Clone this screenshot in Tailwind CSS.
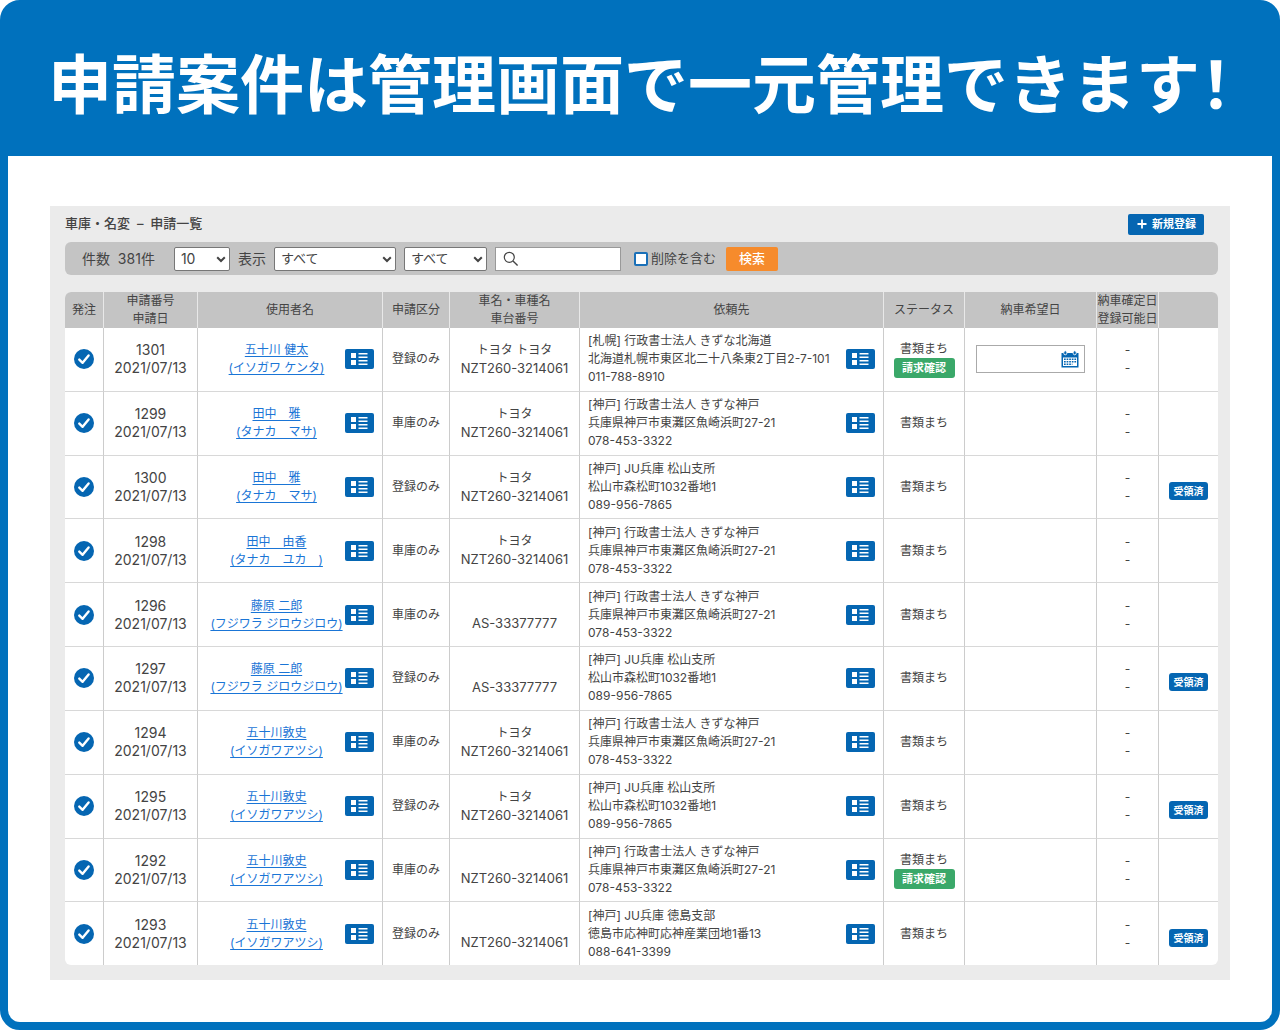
<!DOCTYPE html>
<html lang="ja">
<head>
<meta charset="utf-8">
<title>申請一覧</title>
<script src="https://cdn.jsdelivr.net/npm/@tailwindcss/browser@4"></script>
</head>
<body class="min-h-screen bg-white font-['Inter','Noto_Sans_CJK_JP',sans-serif] text-xs text-[#444]">

<svg class="hidden" aria-hidden="true">
  <symbol id="check" viewBox="0 0 20 20">
    <circle cx="10" cy="10" r="10" fill="#0566b2"/>
    <path d="M5.3 10.6 8.6 13.8 14.6 6.4" fill="none" stroke="#fff" stroke-width="2.4" stroke-linecap="round" stroke-linejoin="round"/>
  </symbol>
  <symbol id="list" viewBox="0 0 29 20">
    <rect width="29" height="20" rx="2" fill="#0566b2"/>
    <path d="M6 4h5v5H6zM6 11h5v5H6zM13.5 4h9v1.6h-9zM13.5 7.4h9V9h-9zM13.5 10.9h9v1.6h-9zM13.5 14.4h9V16h-9z" fill="#fff"/>
  </symbol>
  <symbol id="calendar" viewBox="0 0 18 18">
    <path d="M.5 3h17v14.5H.5z" fill="#0566b2"/>
    <path d="M2 7.5h14V16H2z" fill="#fff"/>
    <path d="M3 9.2h12.4M3 11.7h12.4M3 14.2h8.4" stroke="#0566b2" stroke-width="1.5" stroke-dasharray="1.7 .9"/>
    <rect x="2.8" y=".8" width="3" height="4" rx="1.5" fill="#0566b2" stroke="#fff" stroke-width=".9"/>
    <rect x="12.2" y=".8" width="3" height="4" rx="1.5" fill="#0566b2" stroke="#fff" stroke-width=".9"/>
  </symbol>
  <symbol id="chevron" viewBox="0 0 10 10">
    <path d="M1.2 3.2 5 7 8.8 3.2" fill="none" stroke="#444" stroke-width="2"/>
  </symbol>
</svg>

<main class="flex min-h-screen flex-col rounded-[20px] border-8 border-[#0071bd] bg-white">
  <header class="flex h-[148px] items-center justify-center bg-[#0071bd] pb-1">
    <h1 class="whitespace-nowrap font-['Noto_Sans_CJK_JP',sans-serif] text-[64px] leading-none font-bold text-white">申請案件は管理画面で一元管理できます<span class="[font-feature-settings:'halt']">！</span></h1>
  </header>

  <section class="mx-[42px] mt-[50px] mb-[42px] bg-[#ebebeb] pr-3 pb-[15px] pl-[15px]">
    <div class="flex h-9 items-center justify-between pr-[14px]">
      <h2 class="text-[13px] font-medium whitespace-pre">車庫・名変  –  申請一覧</h2>
      <button type="button" class="flex h-[21px] items-center gap-1 rounded-xs bg-[#0566b2] px-2 text-[11px] font-bold text-white">
        <svg class="size-3" viewBox="0 0 12 12" aria-hidden="true"><path d="M6 1.5v9M1.5 6h9" stroke="#fff" stroke-width="1.8"/></svg>
        新規登録
      </button>
    </div>

    <form class="flex h-[33px] items-center rounded-md bg-[#c4c4c4] pl-[17px] text-sm">
      <span class="mr-[19px] whitespace-pre">件数  381件</span>
      <label class="flex items-center gap-2">
        <span class="grid w-14 items-center">
          <select class="col-start-1 row-start-1 h-6 appearance-none rounded-xs border border-[#777] bg-white pl-[6px]"><option>10</option></select>
          <svg class="pointer-events-none col-start-1 row-start-1 mr-1 size-[10px] justify-self-end" aria-hidden="true"><use href="#chevron"/></svg>
        </span>
        表示
      </label>
      <span class="ml-2 grid w-[122px] items-center text-[13px]">
        <select aria-label="区分" class="col-start-1 row-start-1 h-6 appearance-none rounded-xs border border-[#777] bg-white pl-[6px]"><option>すべて</option></select>
        <svg class="pointer-events-none col-start-1 row-start-1 mr-1 size-[10px] justify-self-end" aria-hidden="true"><use href="#chevron"/></svg>
      </span>
      <span class="ml-2 grid w-[83px] items-center text-[13px]">
        <select aria-label="ステータス" class="col-start-1 row-start-1 h-6 appearance-none rounded-xs border border-[#777] bg-white pl-[6px]"><option>すべて</option></select>
        <svg class="pointer-events-none col-start-1 row-start-1 mr-1 size-[10px] justify-self-end" aria-hidden="true"><use href="#chevron"/></svg>
      </span>
      <span class="ml-2 grid w-[126px] items-center text-[13px]">
        <input type="search" aria-label="キーワード" class="col-start-1 row-start-1 h-6 min-w-0 border border-[#999] bg-white pr-1 pl-7">
        <svg class="pointer-events-none col-start-1 row-start-1 ml-2 size-4" viewBox="0 0 16 16" aria-hidden="true"><circle cx="6.3" cy="6.3" r="5" fill="none" stroke="#444" stroke-width="1.2"/><path d="m10 10 4.6 4.6" stroke="#444" stroke-width="1.4"/></svg>
      </span>
      <label class="ml-[13px] flex items-center gap-[3px] text-[13px]">
        <input type="checkbox" class="size-[14px] appearance-none rounded-xs border-2 border-[#1a70b8] bg-white">
        削除を含む
      </label>
      <button type="button" class="ml-[10px] h-6 w-[52px] rounded-xs bg-[#f68b2c] text-[13px] font-medium text-white">検索</button>
    </form>

    <div class="mt-[17px] overflow-hidden rounded-md bg-white">
      <table class="h-[673px] w-full table-fixed border-separate border-spacing-0 text-center leading-[18px]">
        <colgroup>
          <col class="w-[39px]"><col class="w-[94px]"><col class="w-[185px]"><col class="w-[67px]"><col class="w-[130px]"><col><col class="w-[81px]"><col class="w-[132px]"><col class="w-[62px]"><col class="w-[59px]">
        </colgroup>
        <thead class="bg-[#c4c4c4]">
          <tr class="h-9 *:border-r *:border-[#e8e8e8] *:p-0 *:font-normal *:whitespace-nowrap *:last:border-r-0">
            <th scope="col">発注</th>
            <th scope="col">申請番号<br>申請日</th>
            <th scope="col">使用者名</th>
            <th scope="col">申請区分</th>
            <th scope="col">車名・車種名<br>車台番号</th>
            <th scope="col">依頼先</th>
            <th scope="col">ステータス</th>
            <th scope="col">納車希望日</th>
            <th scope="col">納車確定日<br>登録可能日</th>
            <th scope="col" aria-label="受領"></th>
          </tr>
        </thead>
        <tbody id="rows"></tbody>
      </table>
    </div>
  </section>
</main>

<script>
  const offices = {
    sapporo: ['[札幌] 行政書士法人 きずな北海道', '北海道札幌市東区北二十八条東2丁目2-7-101', '011-788-8910'],
    kobe: ['[神戸] 行政書士法人 きずな神戸', '兵庫県神戸市東灘区魚崎浜町27-21', '078-453-3322'],
    matsuyama: ['[神戸] JU兵庫 松山支所', '松山市森松町1032番地1', '089-956-7865'],
    tokushima: ['[神戸] JU兵庫 徳島支部', '徳島市応神町応神産業団地1番13', '088-641-3399'],
  };
  const nzt = 'NZT260-3214061';
  const cases = [
    { no: 1301, name: '五十川 健太', kana: 'イソガワ ケンタ', kind: '登録のみ', car: 'トヨタ トヨタ', vin: nzt, office: 'sapporo', billing: true, date: true },
    { no: 1299, name: '田中　雅', kana: 'タナカ　マサ', kind: '車庫のみ', car: 'トヨタ', vin: nzt, office: 'kobe' },
    { no: 1300, name: '田中　雅', kana: 'タナカ　マサ', kind: '登録のみ', car: 'トヨタ', vin: nzt, office: 'matsuyama', received: true },
    { no: 1298, name: '田中　由香', kana: 'タナカ　ユカ　', kind: '車庫のみ', car: 'トヨタ', vin: nzt, office: 'kobe' },
    { no: 1296, name: '藤原 二郎', kana: 'フジワラ ジロウジロウ', kind: '車庫のみ', car: '', vin: 'AS-33377777', office: 'kobe' },
    { no: 1297, name: '藤原 二郎', kana: 'フジワラ ジロウジロウ', kind: '登録のみ', car: '', vin: 'AS-33377777', office: 'matsuyama', received: true },
    { no: 1294, name: '五十川敦史', kana: 'イソガワアツシ', kind: '車庫のみ', car: 'トヨタ', vin: nzt, office: 'kobe' },
    { no: 1295, name: '五十川敦史', kana: 'イソガワアツシ', kind: '登録のみ', car: 'トヨタ', vin: nzt, office: 'matsuyama', received: true },
    { no: 1292, name: '五十川敦史', kana: 'イソガワアツシ', kind: '車庫のみ', car: '', vin: nzt, office: 'kobe', billing: true },
    { no: 1293, name: '五十川敦史', kana: 'イソガワアツシ', kind: '登録のみ', car: '', vin: nzt, office: 'tokushima', received: true },
  ];
  const detail = '<button type="button" aria-label="詳細" class="shrink-0"><svg class="h-5 w-[29px]" aria-hidden="true"><use href="#list"/></svg></button>';

  document.getElementById('rows').innerHTML = cases.map(c => `
    <tr class="*:border-r *:border-b *:border-r-[#ccc] *:border-b-[#d8d8d8] *:p-0 *:whitespace-nowrap *:last:border-r-0 last:*:border-b-0">
      <td><svg class="mx-auto size-5" role="img" aria-label="発注済"><use href="#check"/></svg></td>
      <td class="text-sm leading-[18px]">${c.no}<br>2021/07/13</td>
      <td>
        <div class="flex items-center pr-2 pl-[10px]">
          <a href="#" class="flex-1 text-[#1a75d6] underline underline-offset-2">${c.name}<br>(${c.kana})</a>${detail}
        </div>
      </td>
      <td>${c.kind}</td>
      <td>${c.car || '&nbsp;'}<br><span class="text-[13px]">${c.vin}</span></td>
      <td>
        <div class="flex items-center justify-between pr-2 pl-2 text-left">
          <p>${offices[c.office].join('<br>')}</p>${detail}
        </div>
      </td>
      <td>書類まち${c.billing ? '<button type="button" class="mx-auto block h-5 w-[61px] rounded-[3px] bg-[#3aa869] text-[11px] font-bold text-white">請求確認</button>' : ''}</td>
      <td>${c.date ? `<div class="mx-[11px] grid items-center">
        <input type="text" aria-label="納車希望日" class="col-start-1 row-start-1 h-7 min-w-0 border border-[#aaa] bg-white pr-7 pl-1">
        <svg class="pointer-events-none col-start-1 row-start-1 mr-[6px] size-[18px] justify-self-end" aria-hidden="true"><use href="#calendar"/></svg>
      </div>` : ''}</td>
      <td>-<br>-</td>
      <td>${c.received ? '<span class="mx-auto mt-2 block h-[18px] w-[39px] rounded-[3px] bg-[#0566b2] text-[10px] font-bold text-white">受領済</span>' : ''}</td>
    </tr>`).join('');
</script>
</body>
</html>
